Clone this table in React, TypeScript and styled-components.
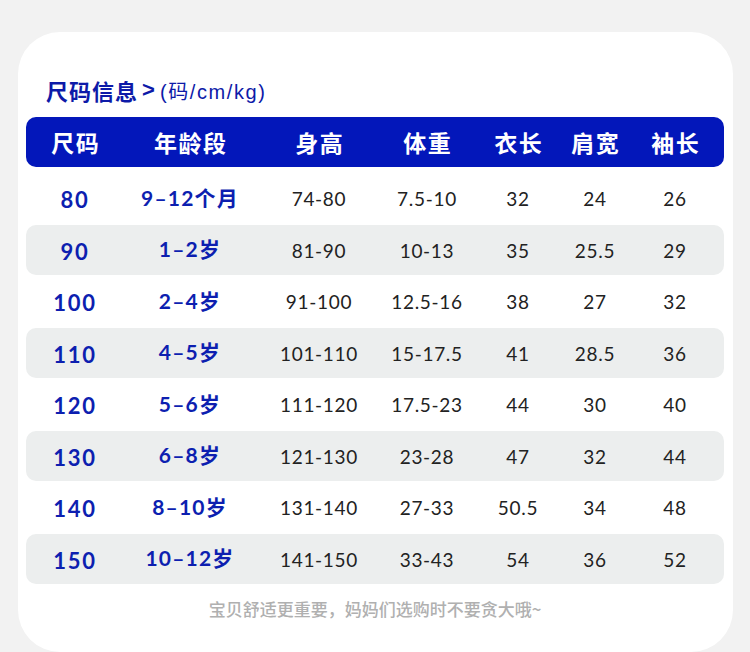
import React from "react";
import styled, { createGlobalStyle } from "styled-components";

const Global = createGlobalStyle`
  html, body { margin: 0; padding: 0; background: #f2f2f2; }
  body { font-family: "Noto Sans CJK SC", "Noto Sans", sans-serif; }
`;

const Page = styled.div`
  width: 750px;
  height: 652px;
  padding-top: 32px;
  box-sizing: border-box;
  overflow: hidden;
`;

const Card = styled.div`
  margin-left: 18px;
  width: 715px;
  height: 620px;
  box-sizing: border-box;
  background: #fff;
  border-radius: 42px;
  padding: 0 9px 0 8px;
  display: flex;
  flex-direction: column;
`;

const Title = styled.div`
  height: 85px;
  display: flex;
  align-items: center;
  padding: 30px 0 0 20px;
  box-sizing: border-box;
  color: #0d1aa8;
`;

const TitleMain = styled.span`
  font-family: "Noto Sans CJK SC", sans-serif;
  font-weight: 700;
  font-size: 22px;
  letter-spacing: 1px;
`;

const TitleArrow = styled.span`
  font-family: "Liberation Sans", sans-serif;
  font-weight: 700;
  font-size: 22px;
  margin: 0 5px 0 4px;
`;

const TitleSub = styled.span`
  font-family: "Liberation Sans", "Noto Sans CJK SC", sans-serif;
  font-size: 20px;
  font-weight: 400;
  padding-top: 2px;
  letter-spacing: 1.6px;
`;

const cols = "98px 132px 126px 90px 92px 62px 98px";

const HeaderBar = styled.div`
  display: grid;
  grid-template-columns: ${cols};
  height: 50px;
  background: #0317ba;
  border-radius: 10px;
  align-items: center;
  margin-bottom: 6.5px;
`;

const HeadCell = styled.div`
  text-align: center;
  color: #fff;
  font-family: "Noto Sans CJK SC", sans-serif;
  font-weight: 700;
  font-size: 23px;
  letter-spacing: 1.5px;
  padding-left: 1.5px;
`;

const Rows = styled.div`
  display: flex;
  flex-direction: column;
  gap: 1.5px;
`;

const Row = styled.div<{ $shaded: boolean }>`
  display: grid;
  grid-template-columns: ${cols};
  height: 50px;
  align-items: center;
  border-radius: 10px;
  background: ${(p) => (p.$shaded ? "#eceeee" : "transparent")};
`;

const SizeCell = styled.div`
  text-align: center;
  color: #0d1fb0;
  font-family: Lato, sans-serif;
  font-weight: 700;
  font-size: 22px;
  letter-spacing: 1.8px;
  padding-top: 2px;
`;

const AgeCell = styled.div`
  text-align: center;
  color: #0d1fb0;
  font-family: Lato, "Noto Sans CJK SC", sans-serif;
  font-weight: 700;
  font-size: 21px;
  letter-spacing: 1.2px;
  margin-top: -4px;
`;

const DataCell = styled.div`
  text-align: center;
  color: #222;
  font-family: Lato, sans-serif;
  font-weight: 400;
  font-size: 19px;
  letter-spacing: 0.7px;
`;

const Footer = styled.div`
  text-align: center;
  color: #b0b0b0;
  font-family: "Noto Sans CJK SC", sans-serif;
  font-weight: 500;
  font-size: 17px;
  letter-spacing: 0px;
  margin-top: 12px;
`;

const headers = ["尺码", "年龄段", "身高", "体重", "衣长", "肩宽", "袖长"];

const data: string[][] = [
  ["80", "9–12个月", "74-80", "7.5-10", "32", "24", "26"],
  ["90", "1–2岁", "81-90", "10-13", "35", "25.5", "29"],
  ["100", "2–4岁", "91-100", "12.5-16", "38", "27", "32"],
  ["110", "4–5岁", "101-110", "15-17.5", "41", "28.5", "36"],
  ["120", "5–6岁", "111-120", "17.5-23", "44", "30", "40"],
  ["130", "6–8岁", "121-130", "23-28", "47", "32", "44"],
  ["140", "8–10岁", "131-140", "27-33", "50.5", "34", "48"],
  ["150", "10–12岁", "141-150", "33-43", "54", "36", "52"],
];

export default function App() {
  return (
    <Page>
      <Global />
      <Card>
        <Title>
          <TitleMain>尺码信息</TitleMain>
          <TitleArrow>&gt;</TitleArrow>
          <TitleSub>(码/cm/kg)</TitleSub>
        </Title>
        <HeaderBar>
          {headers.map((h) => (
            <HeadCell key={h}>{h}</HeadCell>
          ))}
        </HeaderBar>
        <Rows>
          {data.map((r, i) => (
            <Row key={r[0]} $shaded={i % 2 === 1}>
              <SizeCell>{r[0]}</SizeCell>
              <AgeCell>{r[1]}</AgeCell>
              {r.slice(2).map((v, j) => (
                <DataCell key={j}>{v}</DataCell>
              ))}
            </Row>
          ))}
        </Rows>
        <Footer>宝贝舒适更重要，妈妈们选购时不要贪大哦~</Footer>
      </Card>
    </Page>
  );
}
